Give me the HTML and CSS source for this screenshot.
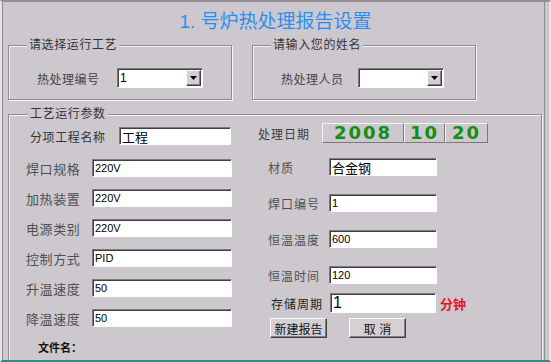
FILE: index.html
```html
<!DOCTYPE html>
<html lang="zh-CN">
  <head>
    <meta charset="UTF-8" />
    <meta name="viewport" content="width=device-width, initial-scale=1.0" />
    <title>号炉热处理报告设置</title>
    <link rel="stylesheet" href="styles.css">
  </head>
  <body>
    <div class="window">
      <h1 class="title">1. 号炉热处理报告设置</h1>

      <div class="top-row">
        <fieldset class="group group-small">
          <legend>请选择运行工艺</legend>
          <div class="field">
            <label class="combo-label">热处理编号</label>
            <div class="combo">
              <span class="combo-value">1</span>
              <span class="combo-btn">
                <svg width="7" height="4" viewBox="0 0 7 4"><path d="M0 0h7L3.5 4z" fill="#000"/></svg>
              </span>
            </div>
          </div>
        </fieldset>

        <fieldset class="group group-small">
          <legend>请输入您的姓名</legend>
          <div class="field">
            <label class="combo-label combo-label-narrow">热处理人员</label>
            <div class="combo">
              <span class="combo-value"></span>
              <span class="combo-btn">
                <svg width="7" height="4" viewBox="0 0 7 4"><path d="M0 0h7L3.5 4z" fill="#000"/></svg>
              </span>
            </div>
          </div>
        </fieldset>
      </div>

      <fieldset class="group group-params">
        <legend>工艺运行参数</legend>
        <div class="params">
          <div class="col col-left">
            <div class="row row-name">
              <label class="lbl lbl-name">分项工程名称</label>
              <input class="txt txt-name" type="text" value="工程" />
            </div>
            <div class="row">
              <label class="lbl">焊口规格</label>
              <input class="txt" type="text" value="220V" />
            </div>
            <div class="row">
              <label class="lbl">加热装置</label>
              <input class="txt" type="text" value="220V" />
            </div>
            <div class="row">
              <label class="lbl">电源类别</label>
              <input class="txt" type="text" value="220V" />
            </div>
            <div class="row">
              <label class="lbl">控制方式</label>
              <input class="txt" type="text" value="PID" />
            </div>
            <div class="row">
              <label class="lbl">升温速度</label>
              <input class="txt" type="text" value="50" />
            </div>
            <div class="row">
              <label class="lbl">降温速度</label>
              <input class="txt" type="text" value="50" />
            </div>
            <div class="file-name">文件名：</div>
          </div>

          <div class="col col-right">
            <div class="date-row">
              <label class="rlbl rlbl-date">处理日期</label>
              <div class="date-box date-year">2008</div>
              <div class="date-box date-month">10</div>
              <div class="date-box date-day">20</div>
            </div>
            <div class="rrow">
              <label class="rlbl">材质</label>
              <input class="txt txt-right txt-cn" type="text" value="合金钢" />
            </div>
            <div class="rrow">
              <label class="rlbl">焊口编号</label>
              <input class="txt txt-right" type="text" value="1" />
            </div>
            <div class="rrow">
              <label class="rlbl">恒温温度</label>
              <input class="txt txt-right" type="text" value="600" />
            </div>
            <div class="rrow">
              <label class="rlbl">恒温时间</label>
              <input class="txt txt-right" type="text" value="120" />
            </div>
            <div class="rrow rrow-store">
              <label class="rlbl rlbl-store">存储周期</label>
              <input class="txt txt-store" type="text" value="1" />
              <span class="unit">分钟</span>
            </div>
            <div class="buttons">
              <button type="button" class="btn">新建报告</button>
              <button type="button" class="btn">取 消</button>
            </div>
          </div>
        </div>
      </fieldset>
    </div>
  </body>
</html>
```

FILE: styles.css
```css
* {
  margin: 0;
  padding: 0;
  box-sizing: border-box;
}

body {
  font-family: "Liberation Sans", "Noto Sans CJK SC", sans-serif;
  color: #222;
  background: #cdc8ce;
}

.window {
  width: 551px;
  height: 362px;
  overflow: hidden;
  background: #cdc8ce;
  border-top: 2px solid #8f8d93;
  border-left: 2px solid #e4e2e6;
  border-right: 2px solid #e4e2e6;
  border-bottom: 2px solid #2f8a80;
  box-shadow: inset 1px 0 #8e8c92, inset -4px 0 #cdc8ce, inset -5px 0 #8e8c92;
  padding-left: 6px;
}

.title {
  font-family: "Liberation Sans", "Noto Sans CJK SC", sans-serif;
  font-size: 19px;
  font-weight: normal;
  line-height: 24px;
  color: #2a8ef0;
  text-align: center;
  padding-top: 8px;
  padding-right: 6px;
}

.top-row {
  display: flex;
  gap: 20px;
  margin-top: 4px;
}

/* etched group frame */
.group {
  border: 1px solid #8e8c92;
  box-shadow: inset 1px 1px #f6f4f8, 1px 1px #f6f4f8;
  min-width: 0;
}

.group legend {
  font-size: 12px;
  line-height: 14px;
  letter-spacing: 0.6px;
  color: #333;
  margin-left: 18px;
  padding: 0 2px;
  background: #cdc8ce;
}

.group-small {
  width: 224px;
  height: 62px;
  padding: 16px 0 0 28px;
}

.group-small legend {
  margin-left: -10px;
}

.field {
  display: flex;
  align-items: center;
}

.combo-label {
  width: 80px;
  font-size: 12px;
  letter-spacing: 0.5px;
  color: #444;
}

.combo-label-narrow {
  width: 77px;
}

.combo {
  width: 86px;
  height: 20px;
  display: flex;
  align-items: center;
  background: #fff;
  border-top: 1px solid #7c7a80;
  border-left: 1px solid #7c7a80;
  border-bottom: 1px solid #fff;
  border-right: 1px solid #fff;
  box-shadow: inset 1px 1px #404040;
  padding: 1px 1px 1px 2px;
}

.combo-value {
  flex: 1;
  font-size: 12px;
  color: #000;
}

.combo-btn {
  width: 15px;
  height: 16px;
  display: flex;
  align-items: center;
  justify-content: center;
  background: #d4d0d4;
  border-top: 1px solid #fff;
  border-left: 1px solid #fff;
  border-right: 1px solid #404040;
  border-bottom: 1px solid #404040;
  box-shadow: inset -1px -1px #808080;
}

.group-params {
  width: 534px;
  height: 270px;
  margin-top: 7px;
}

.group-params legend {
  margin-left: 19px;
}

.params {
  display: flex;
}

.col-left {
  width: 249px;
  padding: 6px 0 0 17px;
  display: flex;
  flex-direction: column;
  gap: 12px;
}

.row,
.rrow {
  display: flex;
  align-items: center;
  height: 18px;
}

.row-name {
  margin-bottom: 2px;
}

.lbl {
  width: 66px;
  font-size: 13px;
  letter-spacing: 0.6px;
  color: #505050;
}

.lbl-name {
  width: 89px;
  margin-left: 4px;
  font-size: 12px;
  color: #333;
}

.txt {
  width: 140px;
  height: 18px;
  font-family: "Liberation Sans", "Noto Sans CJK SC", sans-serif;
  font-size: 11px;
  color: #000;
  background: #fff;
  border-top: 1px solid #7c7a80;
  border-left: 1px solid #7c7a80;
  border-bottom: 1px solid #fff;
  border-right: 1px solid #fff;
  box-shadow: inset 1px 1px #404040;
  padding: 0 2px;
  outline: none;
}

.txt-name {
  width: 112px;
  font-size: 13px;
}

.file-name {
  margin: 1px 0 0 12px;
  font-size: 11px;
  line-height: 16px;
  font-weight: bold;
  color: #111;
}

.col-right {
  padding-top: 2px;
  display: flex;
  flex-direction: column;
}

.date-row {
  display: flex;
  align-items: center;
  height: 20px;
}

.rlbl {
  width: 61px;
  margin-left: 10px;
  font-size: 12px;
  letter-spacing: 1px;
  color: #505050;
}

.rlbl-date {
  width: 64px;
  margin-left: 0;
  color: #3a3a3a;
}

.rlbl-store {
  width: 59px;
  margin-left: 13px;
  color: #222;
}

.date-box {
  height: 20px;
  font-family: "DejaVu Sans", sans-serif;
  font-size: 18px;
  font-weight: bold;
  line-height: 18px;
  letter-spacing: 2px;
  color: #129012;
  text-align: center;
  border-top: 1px solid #f4f2f6;
  border-left: 1px solid #f4f2f6;
  border-right: 1px solid #7a787e;
  border-bottom: 1px solid #7a787e;
}

.date-year {
  width: 82px;
}

.date-month {
  width: 41px;
}

.date-day {
  width: 43px;
}

.date-row + .rrow {
  margin-top: 15px;
}

.rrow + .rrow {
  margin-top: 18px;
}

.txt-right {
  width: 108px;
}

.txt-cn {
  font-size: 13px;
}

.rrow + .rrow-store {
  margin-top: 9px;
  height: 20px;
}

.txt-store {
  width: 106px;
  height: 20px;
  font-size: 16px;
}

.unit {
  margin-left: 4px;
  font-size: 13px;
  font-weight: bold;
  color: #e8141a;
}

.buttons {
  display: flex;
  gap: 22px;
  margin-top: 5px;
  padding-left: 12px;
}

.btn {
  width: 57px;
  height: 20px;
  font-family: "Liberation Sans", "Noto Sans CJK SC", sans-serif;
  font-size: 12px;
  color: #111;
  background: #d4d0d4;
  border-top: 1px solid #fff;
  border-left: 1px solid #fff;
  border-right: 1px solid #404040;
  border-bottom: 1px solid #404040;
  box-shadow: inset -1px -1px #808080;
  cursor: pointer;
}
```
